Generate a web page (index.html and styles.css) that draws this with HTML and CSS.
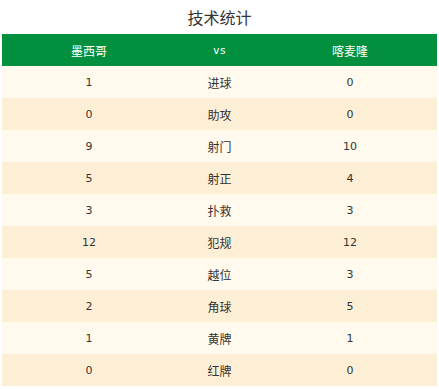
FILE: index.html
```html
<!DOCTYPE html>
<html lang="zh">
<head>
<meta charset="utf-8">
<title>技术统计</title>
<link rel="stylesheet" href="styles.css">
</head>
<body>
<div class="stats">
  <h2 class="stats-title">技术统计</h2>
  <table class="stats-table">
    <thead>
      <tr><th>墨西哥</th><th class="vs">vs</th><th>喀麦隆</th></tr>
    </thead>
    <tbody>
      <tr><td>1</td><td class="label">进球</td><td>0</td></tr>
      <tr><td>0</td><td class="label">助攻</td><td>0</td></tr>
      <tr><td>9</td><td class="label">射门</td><td>10</td></tr>
      <tr><td>5</td><td class="label">射正</td><td>4</td></tr>
      <tr><td>3</td><td class="label">扑救</td><td>3</td></tr>
      <tr><td>12</td><td class="label">犯规</td><td>12</td></tr>
      <tr><td>5</td><td class="label">越位</td><td>3</td></tr>
      <tr><td>2</td><td class="label">角球</td><td>5</td></tr>
      <tr><td>1</td><td class="label">黄牌</td><td>1</td></tr>
      <tr><td>0</td><td class="label">红牌</td><td>0</td></tr>
    </tbody>
  </table>
</div>
</body>
</html>
```

FILE: styles.css
```css
html, body {
  margin: 0;
  padding: 0;
  background: #ffffff;
}
body {
  font-family: "Noto Sans CJK SC", "DejaVu Sans", sans-serif;
  color: #333333;
}
.stats {
  padding: 0 2px;
}
.stats-title {
  margin: 0;
  height: 34px;
  line-height: 34px;
  font-size: 16px;
  font-weight: normal;
  text-align: center;
  color: #333333;
}
.stats-table {
  width: 435px;
  border-collapse: collapse;
  table-layout: fixed;
}
.stats-table th,
.stats-table td {
  padding: 0;
  height: 32px;
  text-align: center;
  font-size: 12px;
  font-weight: normal;
}
.stats-table th {
  background: #03903e;
  color: #ffffff;
  width: 40%;
}
.stats-table th.vs {
  width: 20%;
  font-family: "DejaVu Sans Mono", monospace;
  font-size: 11px;
}
.stats-table td {
  color: #333333;
  font-family: "DejaVu Sans", "Noto Sans CJK SC", sans-serif;
  font-size: 11px;
}
.stats-table td.label {
  font-family: "Noto Sans CJK SC", sans-serif;
  font-size: 12px;
}
.stats-table tbody tr:nth-child(odd) {
  background: #fffaed;
}
.stats-table tbody tr:nth-child(even) {
  background: #fdefd5;
}
```
